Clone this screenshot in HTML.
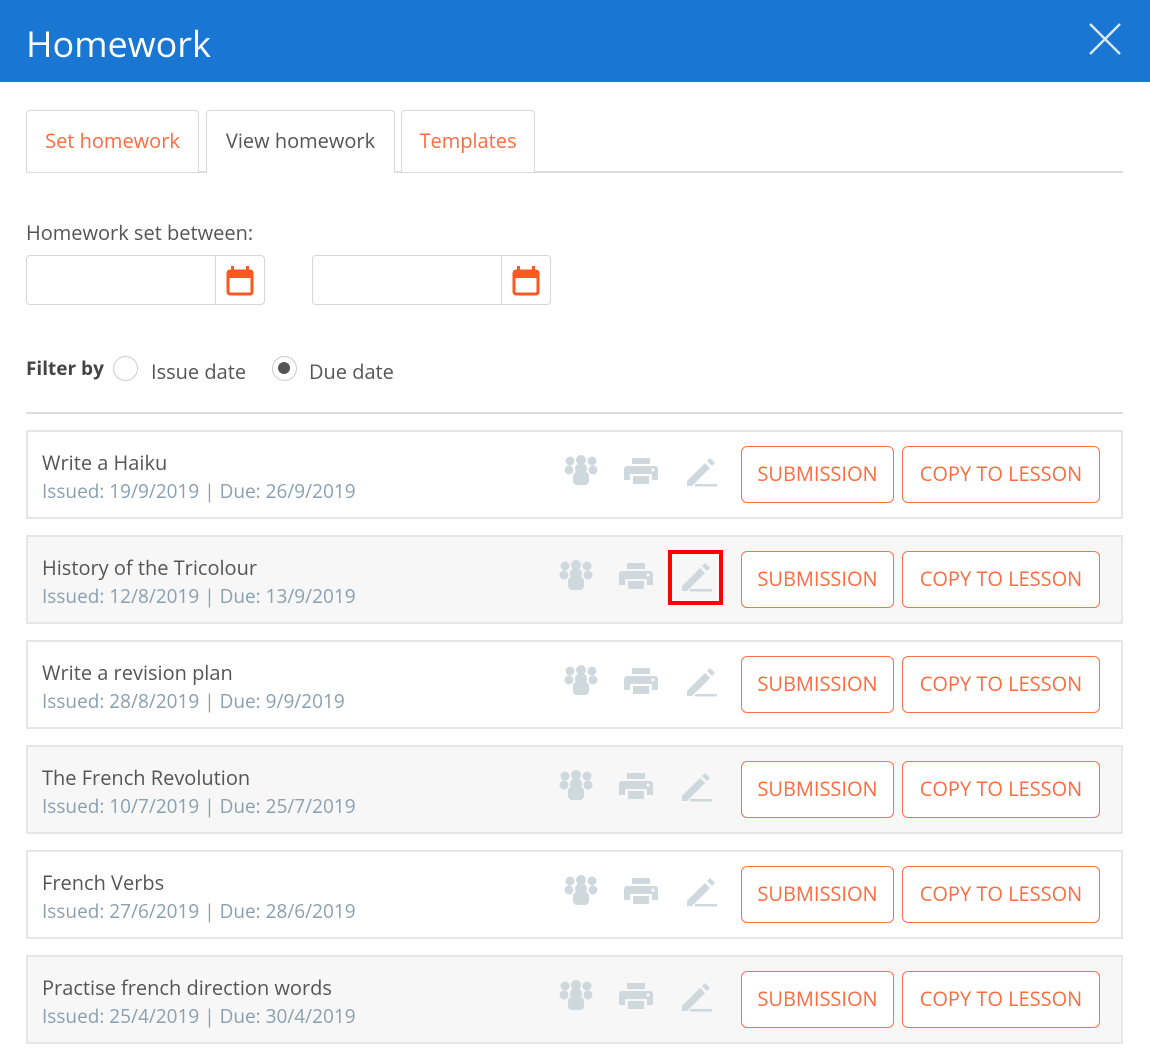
<!DOCTYPE html>
<html><head><style>
*{box-sizing:border-box;margin:0;padding:0}
body{width:1150px;height:1053px;background:#fff;font-family:"Open Sans","Liberation Sans",sans-serif;position:relative;overflow:hidden}
.a{position:absolute}
.hdr{left:0;top:0;width:1150px;height:82px;background:#1976d2}
.tab{border:1px solid #d8d8d8;border-bottom:none;border-radius:4px 4px 0 0;height:62px;top:110px;font-size:20px;line-height:60px;text-align:center;background:#fff}
.inp{border:1px solid #d6d6d6;border-radius:4px;height:50px;top:255px;width:239px}
.inp .sep{position:absolute;left:188px;top:0;bottom:0;border-left:1px solid #d6d6d6}
.row{left:26px;width:1097px;height:89px;border:2px solid #e6e6e6}
.t{left:14px;top:17px;font-size:20px;color:#555;white-space:nowrap}
.s{left:14px;top:46px;font-size:19px;color:#8aa0b0;white-space:nowrap}
.btn{top:14px;height:57px;border:1.5px solid #ff7043;border-radius:6px;color:#ff6b3d;font-size:20px;text-align:center;line-height:54px;background:#fff}
</style></head><body>
<div class="a hdr"></div>
<div class="a" style="left:26px;top:19px;font-size:36px;color:#fff">Homework</div>
<svg class="a" style="left:1088px;top:22px" width="34" height="34"><path d="M2 2L32 32M32 2L2 32" stroke="#dde9f7" stroke-width="2.4"/></svg>

<div class="a" style="left:26px;top:171px;width:1097px;border-top:2px solid #ddd"></div>
<div class="a tab" style="left:26px;width:173px;color:#ff6b3d">Set homework</div>
<div class="a tab" style="left:206px;width:189px;height:63px;color:#555">View homework</div>
<div class="a tab" style="left:401px;width:134px;color:#ff6b3d">Templates</div>

<div class="a" style="left:26px;top:219px;font-size:20px;color:#555">Homework set between:</div>
<div class="a inp" style="left:26px"><div class="sep"></div>
<svg class="a" style="left:198px;top:9px" width="30" height="32"><rect x="3" y="6" width="24" height="23" rx="2" fill="none" stroke="#ff5722" stroke-width="3"/><rect x="3" y="6" width="24" height="7" fill="#ff5722"/><rect x="6" y="1" width="3" height="6" fill="#ff5722"/><rect x="21" y="1" width="3" height="6" fill="#ff5722"/></svg></div>
<div class="a inp" style="left:312px"><div class="sep"></div>
<svg class="a" style="left:198px;top:9px" width="30" height="32"><rect x="3" y="6" width="24" height="23" rx="2" fill="none" stroke="#ff5722" stroke-width="3"/><rect x="3" y="6" width="24" height="7" fill="#ff5722"/><rect x="6" y="1" width="3" height="6" fill="#ff5722"/><rect x="21" y="1" width="3" height="6" fill="#ff5722"/></svg></div>

<div class="a" style="left:26px;top:355px;font-size:19px;color:#444;font-weight:bold">Filter by</div>
<div class="a" style="left:113px;top:356px;width:25px;height:25px;border:1.5px solid #ccc;border-radius:50%"></div>
<div class="a" style="left:151px;top:358px;font-size:20px;color:#555">Issue date</div>
<div class="a" style="left:272px;top:356px;width:25px;height:25px;border:1.5px solid #ccc;border-radius:50%"><div class="a" style="left:5px;top:5px;width:12px;height:12px;border-radius:50%;background:#555"></div></div>
<div class="a" style="left:309px;top:358px;font-size:20px;color:#555">Due date</div>
<div class="a" style="left:26px;top:412px;width:1097px;border-top:2px solid #ddd"></div>

<div id="rows"></div>
<script>
var d=[["Write a Haiku","Issued: 19/9/2019 | Due: 26/9/2019"],["History of the Tricolour","Issued: 12/8/2019 | Due: 13/9/2019"],["Write a revision plan","Issued: 28/8/2019 | Due: 9/9/2019"],["The French Revolution","Issued: 10/7/2019 | Due: 25/7/2019"],["French Verbs","Issued: 27/6/2019 | Due: 28/6/2019"],["Practise french direction words","Issued: 25/4/2019 | Due: 30/4/2019"]];
var h="";
d.forEach(function(r,i){
 var top=430+i*105, bg=i%2?"#f7f7f7":"#fff", o=i%2?-5:0;
 h+='<div class="a row" style="top:'+top+'px;background:'+bg+'">'+
 '<div class="a t">'+r[0]+'</div><div class="a s">'+r[1]+'</div>'+
 '<svg class="a" style="left:'+(536+o)+'px;top:23px" width="34" height="32" fill="#cfd8dc"><circle cx="6" cy="6" r="4.5"/><circle cx="28" cy="6" r="4.5"/><circle cx="17" cy="5" r="5"/><circle cx="5" cy="15" r="4.5"/><circle cx="29" cy="15" r="4.5"/><circle cx="17" cy="14" r="6"/><rect x="9" y="17" width="16" height="13" rx="4"/></svg>'+
 '<svg class="a" style="left:'+(596+o)+'px;top:25px" width="34" height="30" fill="#cfd8dc"><rect x="8" y="1" width="18" height="6"/><path d="M3 9h28a3 3 0 0 1 3 3v11h-6v-6H6v6H0V12a3 3 0 0 1 3-3z"/><rect x="9" y="19" width="16" height="8"/><circle cx="29" cy="13" r="1.5" fill="#fff"/></svg>'+
 '<svg class="a" style="left:'+(657+o)+'px;top:25px" width="34" height="31" fill="#cfd8dc"><path d="M2 24L20 6l5 5L7 29H2z"/><path d="M22 4l3-3 5 5-3 3z"/><rect x="10" y="27" width="22" height="2.5"/></svg>'+
 '<div class="a btn" style="left:713px;width:153px">SUBMISSION</div>'+
 '<div class="a btn" style="left:874px;width:198px">COPY TO LESSON</div></div>';
});
document.getElementById("rows").innerHTML=h;
</script>
<div class="a" style="left:668px;top:550px;width:55px;height:55px;border:4px solid #f00"></div>
</body></html>
